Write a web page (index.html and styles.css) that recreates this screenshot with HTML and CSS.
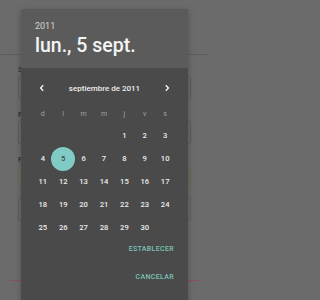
FILE: index.html
```html
<!DOCTYPE html>
<html lang="es">
<head>
<meta charset="utf-8">
<link rel="stylesheet" href="styles.css">
</head>
<body>
<div class="page">
  <div class="appbar"></div>
  <div class="field">
    <div class="label">S</div>
    <div class="box"></div>
  </div>
  <div class="field">
    <div class="label">F</div>
    <div class="box"></div>
  </div>
  <div class="field">
    <div class="label">F</div>
    <div class="box box-olive"></div>
  </div>
  <div class="box box-last"></div>
  <div class="redline"></div>
</div>

<div class="dialog">
  <div class="dlg-header">
    <div class="year">2011</div>
    <div class="date">lun., 5 sept.</div>
  </div>
  <div class="dlg-body">
    <div class="nav">
      <svg class="chev" viewBox="0 0 8 8" width="8" height="8"><polyline points="5.2,1.3 2.6,4 5.2,6.7" fill="none" stroke="#f2f2f2" stroke-width="1.4"/></svg>
      <div class="month">septiembre de 2011</div>
      <svg class="chev" viewBox="0 0 8 8" width="8" height="8"><polyline points="2.8,1.3 5.4,4 2.8,6.7" fill="none" stroke="#f2f2f2" stroke-width="1.4"/></svg>
    </div>
    <div class="grid weekdays">
      <span>d</span><span>l</span><span>m</span><span>m</span><span>j</span><span>v</span><span>s</span>
    </div>
    <div class="grid days">
      <span></span><span></span><span></span><span></span><span>1</span><span>2</span><span>3</span>
      <span>4</span><span class="sel"><i>5</i></span><span>6</span><span>7</span><span>8</span><span>9</span><span>10</span>
      <span>11</span><span>12</span><span>13</span><span>14</span><span>15</span><span>16</span><span>17</span>
      <span>18</span><span>19</span><span>20</span><span>21</span><span>22</span><span>23</span><span>24</span>
      <span>25</span><span>26</span><span>27</span><span>28</span><span>29</span><span>30</span><span></span>
    </div>
    <div class="actions">
      <div class="btn">ESTABLECER</div>
      <div class="btn">CANCELAR</div>
    </div>
  </div>
</div>
</body>
</html>
```

FILE: styles.css
```css
html, body {
  margin: 0;
  padding: 0;
}
body {
  width: 209px;
  height: 300px;
  overflow: hidden;
  background: #6b6b6b;
  font-family: Roboto, "Liberation Sans", sans-serif;
  position: relative;
}
.page {
  display: flex;
  flex-direction: column;
}
.appbar {
  height: 54px;
  border-bottom: 1px solid #5a5d5a;
}
.field {
  display: flex;
  flex-direction: column;
  padding: 0 18px;
}
.label {
  font-size: 8px;
  line-height: 10px;
  color: #252525;
  margin-top: 10px;
  height: 11px;
}
.box {
  height: 21px;
  border: 1px solid #5c5c5c;
  border-radius: 2px;
}
.field + .field .label {
  margin-top: 11px;
}
.box-olive {
  border-color: #6a6a52;
}
.box-last {
  margin: 8px 18px 0;
  height: 22px;
  border: 1px solid #5e5e5e;
}
.redline {
  margin: 59px 9px 0;
  height: 1px;
  background: #8a5258;
}

.dialog {
  position: absolute;
  left: 21px;
  top: 9px;
  width: 167px;
  height: 300px;
  background: #4a4a4a;
  box-shadow: 0 2px 6px rgba(0,0,0,0.25);
  display: flex;
  flex-direction: column;
}
.dlg-header {
  height: 59px;
  background: #5b5b5b;
  padding-left: 14px;
  box-sizing: border-box;
  padding-top: 12px;
  color: #fff;
}
.year {
  font-size: 9px;
  line-height: 10px;
  color: #d2d2d2;
}
.date {
  font-size: 19.5px;
  font-weight: 500;
  line-height: 24px;
  margin-top: 3px;
  color: #f4f4f4;
}
.dlg-body {
  display: flex;
  flex-direction: column;
}
.nav {
  margin-top: 10px;
  height: 20px;
  display: flex;
  align-items: center;
  justify-content: space-between;
  padding: 0 17px;
}
.month {
  font-size: 8px;
  font-weight: 500;
  color: #ececec;
}
.grid {
  display: grid;
  grid-template-columns: repeat(7, 20.4px);
  justify-content: center;
  margin-left: -1px;
}
.grid span {
  display: flex;
  align-items: center;
  justify-content: center;
}
.weekdays {
  margin-top: 6px;
}
.weekdays span {
  height: 20px;
  font-size: 7px;
  color: #a2a2a2;
}
.days span {
  height: 23px;
  font-size: 7.6px;
  font-weight: 500;
  color: #ededed;
}
.days .sel i {
  font-style: normal;
  width: 24px;
  height: 24px;
  border-radius: 50%;
  background: #80cbc4;
  color: #3c4a48;
  display: flex;
  align-items: center;
  justify-content: center;
  flex: none;
}
.actions {
  display: flex;
  flex-direction: column;
  align-items: flex-end;
  padding-right: 14px;
  gap: 8px;
}
.btn {
  height: 20px;
  display: flex;
  align-items: center;
  font-size: 7px;
  font-weight: 500;
  letter-spacing: 0.35px;
  color: #7cc4b6;
}
```
